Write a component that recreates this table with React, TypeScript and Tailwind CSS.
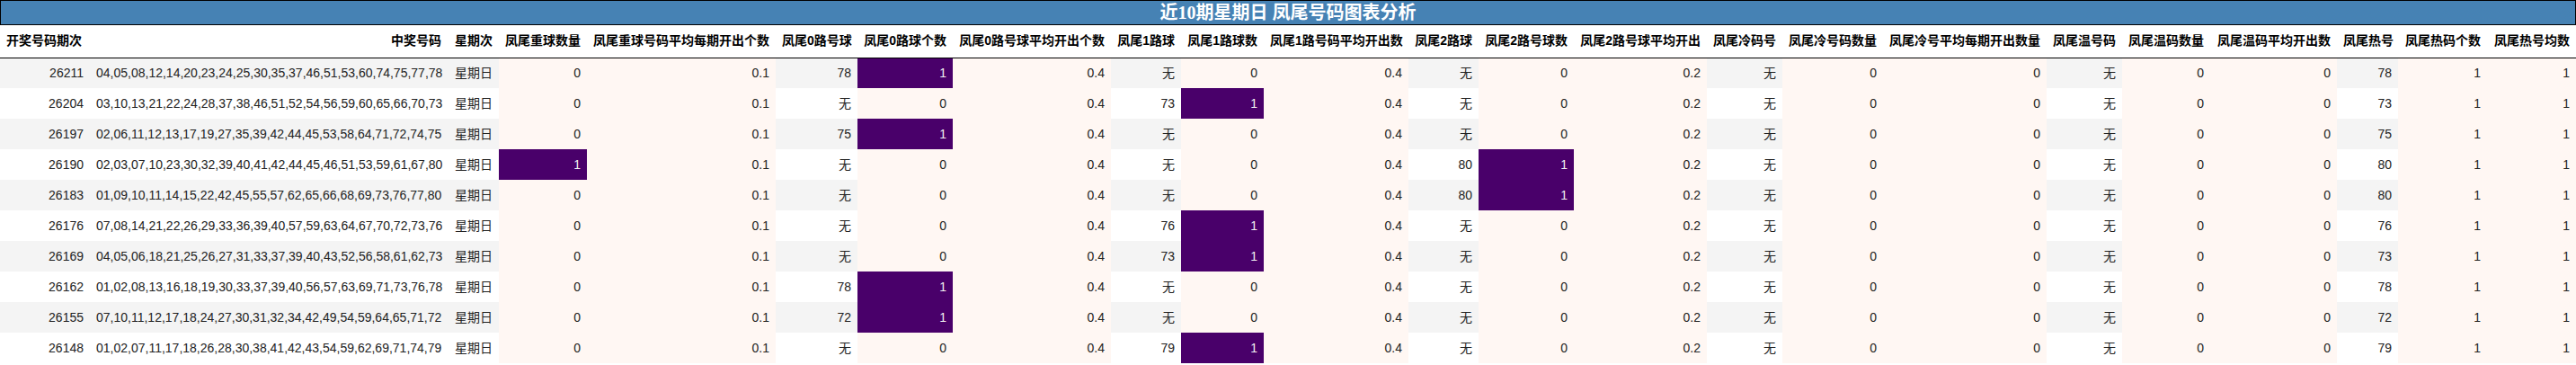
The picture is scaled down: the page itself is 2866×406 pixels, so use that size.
import React from "react";

const headers = [
    "开奖号码期次",
    "中奖号码",
    "星期次",
    "凤尾重球数量",
    "凤尾重球号码平均每期开出个数",
    "凤尾0路号球",
    "凤尾0路球个数",
    "凤尾0路号球平均开出个数",
    "凤尾1路球",
    "凤尾1路球数",
    "凤尾1路号码平均开出数",
    "凤尾2路球",
    "凤尾2路号球数",
    "凤尾2路号球平均开出",
    "凤尾冷码号",
    "凤尾冷号码数量",
    "凤尾冷号平均每期开出数量",
    "凤尾温号码",
    "凤尾温码数量",
    "凤尾温码平均开出数",
    "凤尾热号",
    "凤尾热码个数",
    "凤尾热号均数",
];

const widths = [
    "w-[100px]", "w-[398px]", "w-[57px]", "w-[98px]", "w-[210px]", "w-[91px]",
    "w-[106px]", "w-[176px]", "w-[78px]", "w-[92px]", "w-[161px]", "w-[78px]",
    "w-[106px]", "w-[148px]", "w-[84px]", "w-[112px]", "w-[182px]", "w-[84px]",
    "w-[98px]", "w-[141px]", "w-[68px]", "w-[99px]", "w-[99px]",
];

// columns coloured by the gradient (pink -> purple); the rest are striped
const gradientCols = [3, 4, 6, 7, 9, 10, 12, 13, 15, 16, 18, 19, 21, 22];
// gradient columns where a 1 is the max (dark purple)
const hotCols = [3, 6, 9, 12];

const rows: string[][] = [
    ["26211", "04,05,08,12,14,20,23,24,25,30,35,37,46,51,53,60,74,75,77,78", "星期日", "0", "0.1", "78", "1", "0.4", "无", "0", "0.4", "无", "0", "0.2", "无", "0", "0", "无", "0", "0", "78", "1", "1"],
    ["26204", "03,10,13,21,22,24,28,37,38,46,51,52,54,56,59,60,65,66,70,73", "星期日", "0", "0.1", "无", "0", "0.4", "73", "1", "0.4", "无", "0", "0.2", "无", "0", "0", "无", "0", "0", "73", "1", "1"],
    ["26197", "02,06,11,12,13,17,19,27,35,39,42,44,45,53,58,64,71,72,74,75", "星期日", "0", "0.1", "75", "1", "0.4", "无", "0", "0.4", "无", "0", "0.2", "无", "0", "0", "无", "0", "0", "75", "1", "1"],
    ["26190", "02,03,07,10,23,30,32,39,40,41,42,44,45,46,51,53,59,61,67,80", "星期日", "1", "0.1", "无", "0", "0.4", "无", "0", "0.4", "80", "1", "0.2", "无", "0", "0", "无", "0", "0", "80", "1", "1"],
    ["26183", "01,09,10,11,14,15,22,42,45,55,57,62,65,66,68,69,73,76,77,80", "星期日", "0", "0.1", "无", "0", "0.4", "无", "0", "0.4", "80", "1", "0.2", "无", "0", "0", "无", "0", "0", "80", "1", "1"],
    ["26176", "07,08,14,21,22,26,29,33,36,39,40,57,59,63,64,67,70,72,73,76", "星期日", "0", "0.1", "无", "0", "0.4", "76", "1", "0.4", "无", "0", "0.2", "无", "0", "0", "无", "0", "0", "76", "1", "1"],
    ["26169", "04,05,06,18,21,25,26,27,31,33,37,39,40,43,52,56,58,61,62,73", "星期日", "0", "0.1", "无", "0", "0.4", "73", "1", "0.4", "无", "0", "0.2", "无", "0", "0", "无", "0", "0", "73", "1", "1"],
    ["26162", "01,02,08,13,16,18,19,30,33,37,39,40,56,57,63,69,71,73,76,78", "星期日", "0", "0.1", "78", "1", "0.4", "无", "0", "0.4", "无", "0", "0.2", "无", "0", "0", "无", "0", "0", "78", "1", "1"],
    ["26155", "07,10,11,12,17,18,24,27,30,31,32,34,42,49,54,59,64,65,71,72", "星期日", "0", "0.1", "72", "1", "0.4", "无", "0", "0.4", "无", "0", "0.2", "无", "0", "0", "无", "0", "0", "72", "1", "1"],
    ["26148", "01,02,07,11,17,18,26,28,30,38,41,42,43,54,59,62,69,71,74,79", "星期日", "0", "0.1", "无", "0", "0.4", "79", "1", "0.4", "无", "0", "0.2", "无", "0", "0", "无", "0", "0", "79", "1", "1"],
];

const cellClass = (col: number, rowIdx: number, value: string) => {
    if (gradientCols.includes(col)) {
        if (hotCols.includes(col) && value === "1") {
            return "bg-[#49006a] text-[#f1f1f1]";
        }
        return "bg-[#fff7f3] text-[#222222]";
    }
    return rowIdx % 2 === 0 ? "bg-[#f4f4f4] text-[#222222]" : "bg-white text-[#222222]";
};

const App: React.FC = () => {
    return (
        <div className="w-[2866px] bg-white font-['Liberation_Sans','Noto_Sans_CJK_SC',sans-serif]">
            {/* title bar */}
            <div className="h-[28px] border border-black bg-[#4682b4] flex items-center justify-center">
                <span className="text-white font-bold text-[20px] leading-none font-['Liberation_Serif','Noto_Sans_CJK_SC',serif]">
                    近10期星期日 凤尾号码图表分析
                </span>
            </div>
            <table className="table-fixed border-collapse w-[2866px] text-[14px]">
                <thead>
                    <tr className="h-[36px] border-b border-black">
                        {headers.map((h, i) => (
                            <th
                                key={h}
                                className={`${widths[i]} px-[7px] font-bold text-black whitespace-nowrap ${i === 0 ? "text-left" : "text-right"}`}
                            >
                                {h}
                            </th>
                        ))}
                    </tr>
                </thead>
                <tbody>
                    {rows.map((r, ri) => (
                        <tr key={r[0]} className="h-[34px]">
                            {r.map((v, ci) => (
                                <td
                                    key={ci}
                                    className={`px-[7px] text-right whitespace-nowrap ${cellClass(ci, ri, v)}`}
                                >
                                    {v}
                                </td>
                            ))}
                        </tr>
                    ))}
                </tbody>
            </table>
        </div>
    );
};

export default App;
